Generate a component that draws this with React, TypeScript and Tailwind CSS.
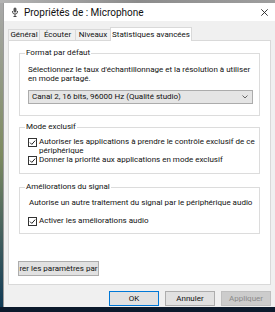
import React from "react";

const FONT = { fontFamily: 'Roboto, "Noto Sans", sans-serif' };

function CheckBox() {
  return (
    <svg width="9" height="9" viewBox="0 0 9 9" className="mt-[1px] shrink-0">
      <rect x="0.5" y="0.5" width="8" height="8" fill="#ffffff" stroke="#333333" />
      <path d="M2 4.6 L3.8 6.4 L7.2 2.6" fill="none" stroke="#222222" strokeWidth="1" />
    </svg>
  );
}

function Group({
  label,
  className,
  children,
}: {
  label: string;
  className: string;
  children: React.ReactNode;
}) {
  return (
    <div className={`mx-[10px] border border-[#dcdcdc] ${className}`}>
      <div className="-mt-[6px] ml-[5px] flex h-[10px] items-center">
        <span className="bg-white px-[1px] leading-[10px]">{label}</span>
      </div>
      {children}
    </div>
  );
}

function Tab({ label, width, selected }: { label: string; width: string; selected?: boolean }) {
  if (selected) {
    return (
      <div
        className={`relative z-10 -mb-px flex h-[14px] items-center justify-center border border-b-0 border-[#d9d9d9] bg-white ${width}`}
      >
        {label}
      </div>
    );
  }
  return (
    <div
      className={`mt-[2px] flex h-[11px] items-center justify-center border border-b-0 border-r-0 border-[#d9d9d9] bg-[#f0f0f0] ${width}`}
    >
      {label}
    </div>
  );
}

export default function App() {
  return (
    <div
      className="flex h-[312px] w-[275px] flex-col overflow-hidden whitespace-nowrap bg-[#0c1a2c] text-[8px] text-[#111111]"
      style={FONT}
    >
      <div className="h-[3px] shrink-0 bg-linear-to-r from-[#b4b4b4] via-[#8c8c8c] to-[#9e9e9e]" />
      <div className="flex h-[304px] shrink-0">
        <div className="w-[3px] bg-linear-to-b from-[#a9a9a9] via-[#7d8a5f] to-[#0f3a55]" />
        <div className="flex flex-1 flex-col border-l border-[#9a9a9a] bg-[#f0f0f0]">
          {/* title bar */}
          <div className="flex h-[18px] items-center bg-white">
            <svg width="6" height="10" viewBox="0 0 6 10" className="ml-[8px]">
              <rect x="1.5" y="0.5" width="3" height="5" rx="1.5" fill="#555555" />
              <path d="M0.5 4 V5 Q0.5 7 3 7 Q5.5 7 5.5 5 V4" fill="none" stroke="#444444" strokeWidth="0.9" />
              <path d="M3 7 V9 M1.5 9.5 H4.5" stroke="#444444" strokeWidth="1" />
            </svg>
            <span className="ml-[6px] text-[10px] leading-[11px]">Propriétés de : Microphone</span>
            <svg width="7" height="7" viewBox="0 0 7 7" className="ml-auto mr-[7px]">
              <path d="M0.3 0.3 L6.7 6.7 M6.7 0.3 L0.3 6.7" stroke="#222222" strokeWidth="0.9" />
            </svg>
          </div>

          {/* tabs */}
          <div className="mt-[6px] flex h-[13px] items-start pl-[4px]">
            <Tab label="Général" width="w-[31px]" />
            <Tab label="Écouter" width="w-[36px]" />
            <Tab label="Niveaux" width="w-[35px]" />
            <Tab label="Statistiques avancées" width="w-[82px]" selected />
          </div>

          {/* panel */}
          <div className="mx-[4px] flex h-[245px] flex-col border border-[#d9d9d9] bg-white">
            <Group label="Format par défaut" className="mt-[12px] pb-[11px]">
              <div className="mt-[7px] pl-[8px] leading-[9px]">
                Sélectionnez le taux d'échantillonnage et la résolution à utiliser
                <br />
                en mode partagé.
              </div>
              <div className="ml-[8px] mr-[6px] mt-[7px] flex h-[14px] items-center border border-[#acacac] bg-[#e5e5e5] pl-[3px] pr-[4px]">
                <span className="leading-[10px]">Canal 2, 16 bits, 96000 Hz (Qualité studio)</span>
                <svg width="6" height="4" viewBox="0 0 6 4" className="ml-auto">
                  <path d="M0.5 0.5 L3 3 L5.5 0.5" fill="none" stroke="#555555" strokeWidth="0.9" />
                </svg>
              </div>
            </Group>

            <Group label="Mode exclusif" className="mt-[11px] pb-[8px]">
              <div className="mt-[5px] flex gap-[2px] pl-[8px] leading-[9px]">
                <CheckBox />
                <span>
                  Autoriser les applications à prendre le contrôle exclusif de ce
                  <br />
                  périphérique
                </span>
              </div>
              <div className="flex gap-[2px] pl-[8px] leading-[9px]">
                <CheckBox />
                <span>Donner la priorité aux applications en mode exclusif</span>
              </div>
            </Group>

            <Group label="Améliorations du signal" className="mt-[13px] pb-[7px]">
              <div className="mt-[6px] pl-[9px] leading-[9px]">
                Autorise un autre traitement du signal par le périphérique audio
              </div>
              <div className="mt-[9px] flex gap-[2px] pl-[8px] leading-[9px]">
                <CheckBox />
                <span>Activer les améliorations audio</span>
              </div>
            </Group>

            <div className="ml-[9px] mt-[27px] flex h-[15px] w-[81px] items-center justify-center overflow-hidden border border-[#adadad] bg-[#e1e1e1]">
              rer les paramètres par
            </div>
          </div>

          {/* buttons */}
          <div className="mt-[6px] flex justify-end gap-[6px] pr-[4px]">
            <div className="flex h-[15px] w-[50px] items-center justify-center border border-[#0078d7] bg-[#e1e1e1]">
              OK
            </div>
            <div className="flex h-[15px] w-[50px] items-center justify-center border border-[#adadad] bg-[#e1e1e1]">
              Annuler
            </div>
            <div className="flex h-[15px] w-[50px] items-center justify-center border border-[#bfbfbf] bg-[#cccccc] text-[#8a8a8a]">
              Appliquer
            </div>
          </div>
        </div>
      </div>
      <div className="flex-1 bg-[#0c1a2c]" />
    </div>
  );
}
